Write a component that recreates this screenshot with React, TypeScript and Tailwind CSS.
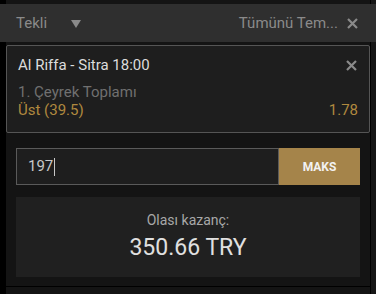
export default function App() {
  return (
    <div className="w-[376px] h-[294px] overflow-hidden bg-[#0b0b0b] font-['Roboto',sans-serif]">
      {/* top strip */}
      <div className="flex h-[4px]">
        <div className="w-[6px] bg-black" />
        <div className="flex-1 bg-[#141414]" />
        <div className="w-[1px] bg-black" />
        <div className="w-[5px] bg-[#161616]" />
      </div>

      {/* header */}
      <div className="flex items-center h-[38px] bg-[#2f2f2f] pl-[16px] pr-[18px] text-[15px] text-[#8a8a8a]">
        <span>Tekli</span>
        <svg className="ml-[24px] mt-[1px]" width="10" height="8" viewBox="0 0 10 8">
          <path d="M0 0H10L5 8Z" fill="#8a8a8a" />
        </svg>
        <span className="ml-auto">Tümünü Tem...</span>
        <svg className="ml-[9px]" width="11" height="11" viewBox="0 0 11 11">
          <path d="M1 1L10 10M10 1L1 10" stroke="#8a8a8a" strokeWidth="2.2" />
        </svg>
      </div>

      <div className="flex h-[252px]">
        <div className="w-[6px] bg-black" />
        <div className="flex-1 flex flex-col bg-[#141414]">
          {/* selection card */}
          <div className="mt-[3px] h-[88px] rounded-[2px] border border-[#555555] bg-[#1e1e1e] pl-[11px] pr-[11px] pt-[8px]">
            <div className="flex items-center justify-between">
              <span className="text-[15px] text-[#dcdcdc]">Al Riffa - Sitra 18:00</span>
              <svg width="11" height="11" viewBox="0 0 11 11" className="mr-[1px]">
                <path d="M1 1L10 10M10 1L1 10" stroke="#8a8a8a" strokeWidth="2.2" />
              </svg>
            </div>
            <div className="mt-[6px] text-[15px] leading-[18px] text-[#707070]">1. Çeyrek Toplamı</div>
            <div className="flex justify-between text-[15px] leading-[18px] text-[#b0893f]">
              <span>Üst (39.5)</span>
              <span>1.78</span>
            </div>
          </div>

          {/* stake input */}
          <div className="mt-[15px] mx-[10px] flex h-[37px]">
            <div className="flex-1 flex items-center border border-[#5a5a5a] bg-[#1e1e1e] pl-[11px] text-[15px] text-[#c8c8c8]">
              197<span className="ml-[1px] w-[1px] h-[18px] bg-[#c8c8c8]" />
            </div>
            <button className="w-[81px] bg-[#a5844a] text-[12px] font-bold text-[#f2f2f2]">MAKS</button>
          </div>

          {/* possible win */}
          <div className="mt-[12px] mx-[10px] h-[80px] bg-[#202020] flex flex-col items-center pt-[13px]">
            <div className="text-[14px] text-[#a8a8a8]">Olası kazanç:</div>
            <div className="mt-[3px] text-[23px] leading-[28px] text-[#e0e0e0]">350.66 TRY</div>
          </div>

          <div className="mt-[9px] h-[1px] bg-black" />
        </div>
        <div className="w-[1px] bg-black" />
        <div className="w-[5px] bg-[#161616]" />
      </div>
    </div>
  );
}
